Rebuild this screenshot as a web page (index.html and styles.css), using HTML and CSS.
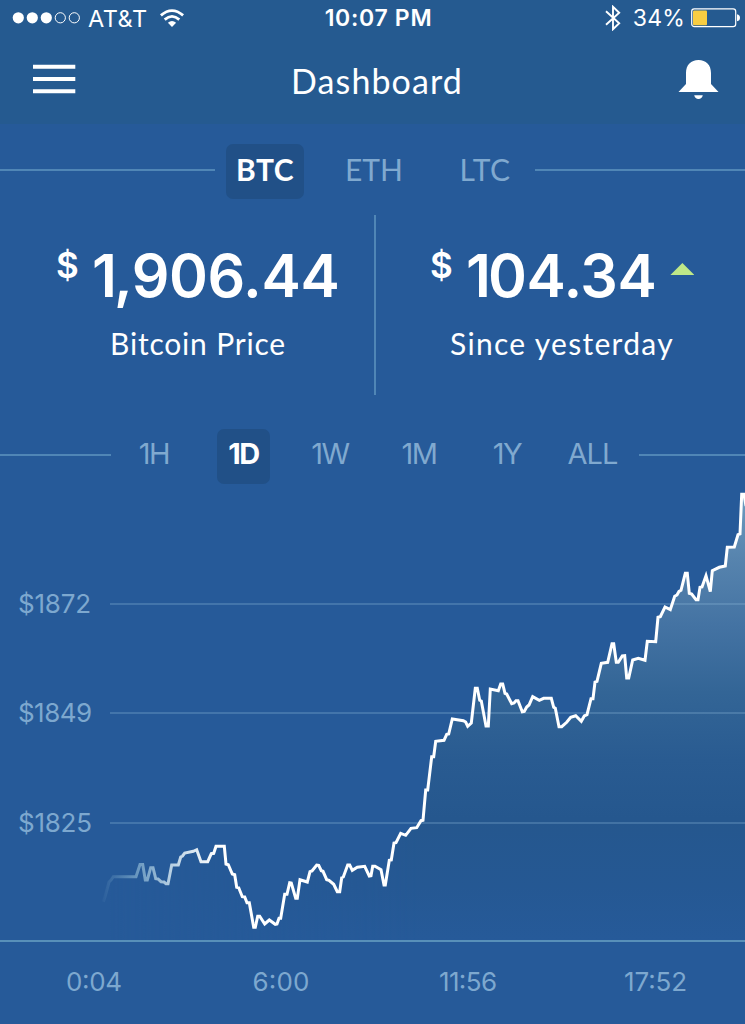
FILE: index.html
```html
<!DOCTYPE html>
<html lang="en">
<head>
<meta charset="utf-8">
<title>Dashboard</title>
<link rel="stylesheet" href="styles.css">
</head>
<body>
<div class="app">
  <header class="header">
    <div class="status">
      <div class="status-side">
        <svg class="signal" width="70" height="14" viewBox="0 0 70 14">
          <g fill="#fff"><circle cx="6.3" cy="6.8" r="5.6"/><circle cx="20.3" cy="6.8" r="5.6"/><circle cx="34.3" cy="6.8" r="5.6"/></g>
          <g fill="none" stroke="#fff" stroke-width="1"><circle cx="48.3" cy="6.8" r="5.1"/><circle cx="62.3" cy="6.8" r="5.1"/></g>
        </svg>
        <span class="carrier">AT&amp;T</span>
        <svg class="wifi" width="26" height="20" viewBox="0 0 26 20">
          <g fill="none" stroke="#fff" stroke-width="2.8"><path d="M1.9 7.4Q13 -2.2 24.1 7.4"/><path d="M5.7 11.6Q13 5.2 20.3 11.6"/></g>
          <path fill="#fff" d="M13 18.9L8.9 14.8Q13 11.2 17.1 14.8Z"/>
        </svg>
      </div>
      <span class="clock">10:07 PM</span>
      <div class="status-side status-right">
        <svg width="16" height="26" viewBox="0 0 16 26"><path d="M1 6.3L14.2 18.2L8 24.2V1.8L14.2 7.8L1 19.7" fill="none" stroke="#fff" stroke-width="1.9"/></svg>
        <span class="percent">34%</span>
        <svg width="50" height="20" viewBox="0 0 50 20">
          <rect x="1.7" y=".9" width="44" height="17.8" rx="2.6" fill="none" stroke="#fff" stroke-width="1.2"/>
          <rect x="3" y="2.4" width="14" height="14.8" rx="1" fill="#f8cd42"/>
          <path d="M47 6.3Q50 6.8 50 9.8T47 13.3Z" fill="#fff"/>
        </svg>
      </div>
    </div>
    <div class="nav">
      <svg class="menu" width="43" height="30" viewBox="0 0 43 30"><path d="M0 2.7H42.3M0 15H42.3M0 27.2H42.3" stroke="#fff" stroke-width="4"/></svg>
      <h1 class="title">Dashboard</h1>
      <svg class="bell" width="41" height="41" viewBox="0 0 41 41"><path fill="#fff" d="M8 14C8 6 13 1 20.5 1S33 6 33 14V25L40.5 33H.5L8 25ZM16.2 36.2H24.8Q23.8 40 20.5 40T16.2 36.2Z"/></svg>
    </div>
  </header>

  <nav class="tabs coins">
    <span class="rule"></span>
    <span class="tab active"><b>BTC</b></span>
    <span class="tab">ETH</span>
    <span class="tab ltc">LTC</span>
    <span class="rule"></span>
  </nav>

  <section class="stats">
    <div class="stat">
      <div class="amount"><span class="currency">$</span><span class="one">1</span><span>,906.44</span></div>
      <div class="label">Bitcoin Price</div>
    </div>
    <div class="stat change">
      <div class="amount"><span class="currency">$</span><span class="one">1</span><span>04.34</span><span class="up"></span></div>
      <div class="label">Since yesterday</div>
    </div>
  </section>

  <nav class="tabs ranges">
    <span class="rule"></span>
    <span class="tab">1H</span>
    <span class="tab active"><b>1D</b></span>
    <span class="tab">1W</span>
    <span class="tab">1M</span>
    <span class="tab">1Y</span>
    <span class="tab all">ALL</span>
    <span class="rule"></span>
  </nav>

  <svg class="chart" width="745" height="540" viewBox="0 484 745 540">
    <defs>
      <linearGradient id="area" gradientUnits="userSpaceOnUse" x1="0" y1="490" x2="0" y2="940">
        <stop offset="0" stop-color="#6f9dc1"/>
        <stop offset=".15" stop-color="#5784ae"/>
        <stop offset=".3" stop-color="#4473a3"/>
        <stop offset=".45" stop-color="#336596"/>
        <stop offset=".6" stop-color="#295b91"/>
        <stop offset=".73" stop-color="#25578e"/>
        <stop offset=".88" stop-color="#255893"/>
        <stop offset="1" stop-color="#265a99"/>
      </linearGradient>
      <linearGradient id="fade" gradientUnits="userSpaceOnUse" x1="110" y1="0" x2="420" y2="0">
        <stop offset="0" stop-color="#000"/><stop offset="1" stop-color="#fff"/>
      </linearGradient>
      <linearGradient id="stroke" gradientUnits="userSpaceOnUse" x1="100" y1="0" x2="216" y2="0">
        <stop offset="0" stop-color="#8fbbd6" stop-opacity="0"/>
        <stop offset=".3" stop-color="#8fbbd6" stop-opacity=".6"/>
        <stop offset=".6" stop-color="#c5dbea" stop-opacity=".9"/>
        <stop offset="1" stop-color="#fff"/>
      </linearGradient>
      <mask id="left" maskUnits="userSpaceOnUse" x="0" y="484" width="745" height="540"><rect y="484" width="745" height="540" fill="url(#fade)"/></mask>
    </defs>
    <path id="fill" fill="url(#area)" mask="url(#left)"/>
    <path d="M110 604H745M110 713H745M110 823H745" stroke="#8ebadb" stroke-opacity=".28" stroke-width="2"/>
    <path d="M0 941H745" stroke="#5890b9" stroke-width="2"/>
    <path id="line" fill="none" stroke="url(#stroke)" stroke-width="3"/>
    <g class="axis">
      <text x="18" y="613" textLength="73">$1872</text>
      <text x="18" y="722" textLength="74">$1849</text>
      <text x="18" y="832" textLength="74">$1825</text>
      <text x="66" y="991" textLength="56">0:04</text>
      <text x="252.5" y="991" textLength="57">6:00</text>
      <text x="439" y="991" textLength="58">11:56</text>
      <text x="624" y="991" textLength="63">17:52</text>
    </g>
  </svg>
</div>
<script src="chart.js"></script>
</body>
</html>
```
FILE: styles.css
```css
body { margin: 0; background: #265a99; color: #fff; font-family: "Lato", sans-serif; }
.app { width: 745px; height: 1024px; overflow: hidden; display: flex; flex-direction: column; background: #265a99; }

.header { height: 124px; flex: none; background: #255a90; }
.status { height: 36px; display: grid; grid-template-columns: 1fr auto 1fr; align-items: center; padding: 0 5px 0 12px; font-family: "Inter", sans-serif; font-size: 23px; }
.status-side { display: flex; align-items: center; }
.status-right { justify-content: flex-end; }
.carrier { margin-left: 6px; font-size: 23.5px; letter-spacing: .5px; font-weight: 400; }
.wifi { margin-left: 11px; }
.clock { padding-left: 5px; font-weight: 600; letter-spacing: .7px; }
.percent { margin: 0 5px 0 12px; font-weight: 400; letter-spacing: .2px; }

.nav { height: 86px; display: flex; align-items: center; justify-content: space-between; padding: 0 26px 0 33px; box-sizing: border-box; }
.title { margin: 4px 0 0; font-size: 34px; line-height: 40px; font-weight: 400; letter-spacing: 1.1px; }

.tabs { height: 55px; flex: none; display: grid; align-items: center; font-size: 30px; line-height: 50px; color: #80a9cf; }
.tab { height: 55px; text-align: center; }
.coins { margin-top: 20px; grid-template-columns: 226px 109px 78px 108px 224px; }
.coins .ltc { padding-left: 36px; letter-spacing: .5px; }
.ranges { grid-template-columns: 111px 86px 93px 80px 98px 78px 93px 106px; font-family: "Inter", sans-serif; font-weight: 400; font-size: 29px; letter-spacing: -1.5px; }
.ranges .all { letter-spacing: -1px; }
.rule { height: 2px; margin-bottom: 3px; background: #5086b6; }
.active { border-radius: 7px; background: #215087; color: #fff; }
.active b { font-weight: 700; }
.coins .rule:first-child { width: 215px; }
.coins .rule:last-child { width: 210px; justify-self: end; }
.coins .active { width: 78px; letter-spacing: .5px; }
.ranges .active { width: 53px; justify-self: center; }

.stats { height: 180px; flex: none; margin: 16px 0 34px; display: grid; grid-template-columns: 374px 1fr; }
.stat { display: flex; flex-direction: column; }
.change { border-left: 2px solid #5086b6; }
.amount { display: flex; height: 110px; padding: 25px 0 0 56px; box-sizing: border-box; font-family: "Inter", sans-serif; font-size: 59px; line-height: 72px; font-weight: 600; letter-spacing: -.4px; }
.change .amount { padding-left: 54px; }
.currency { width: 36px; font-size: 35px; line-height: 50px; }
.one { letter-spacing: -3px; }
.up { width: 24px; height: 12px; margin: 23px 0 0 14px; background: #bfe888; clip-path: polygon(50% 0, 100% 100%, 0 100%); }
.label { font-size: 30px; line-height: 36px; letter-spacing: .8px; text-align: center; padding-left: 22px; }
.change .label { padding-left: 3px; letter-spacing: 1.3px; }

.chart { display: block; flex: none; }
.axis { fill: #7da8cf; font-family: "Inter", sans-serif; font-size: 26px; font-weight: 400; }
```
FILE: chart.js
```js
const points = `103.3,901.7 105,896.7 109,882 111,880 113.3,876.7 136,876.7 140,864.5 142.7,864.5 145.3,880 147.3,880 150.7,867.7 153,867.7 155.7,878.7 158,879 161,881.7 164,882 166,883.7 168,883.7 171.7,865 178.3,865 180.7,857 182.5,856 184.7,853 193.3,851.3 196.7,849.7 201,861.7 207.7,861.7 211.3,853.7 213.7,853.3 216,846.3 224.3,846.3 226,864 228.3,864.7 232.3,874 234.7,874.7 236.7,887.3 238.7,887.7 242.3,896.7 244.7,897 247,902.7 249.3,902.7 253.7,927.3 255.3,927.3 257.7,916.3 259.7,916.3 264.7,924 269.3,920 275.3,924.3 277,924 279,918.3
280.7,918.3 284.7,894.3 287,894.3 289.7,882.7 291.3,883 295.7,898.3 297.3,898.3 300,879.7 307.3,882 310,871.7 312,871 316.7,865 318.7,865.3 321.3,870.7 323,871.3 326.7,879.7 329,880.3 333.7,884.3 337.3,891.7 339.7,891.7 341.7,877.7 343.3,877 347.7,865 349.7,865 352.3,870.3 357.3,867.3 364.7,866.3 369.3,876 371,875.7 372.7,866.3 375,866.3 381,869.7 384,885 385.3,885 389.3,860.3 391.3,860 394,843 396,842.7 400.7,833.3 405.7,835.3 411,828.3 416.7,827.7 421,820.7
423,820.3 425.7,790 427.7,790 431.7,756.7 433.7,756.7 435.7,741.3 444,740.3 446.7,734.3 448.7,734 452.3,719 463.3,720.7 465.7,722 467.7,726.3 471.3,723 475.3,688.3 477.3,688.3 479.7,700.3 481.3,701 486,726 488.3,726 490.3,689 498.3,690.7 500.7,684 502.7,684 505,693.3 506.7,694 511.7,703.7 514,703 516,700.7 518,700.7 522.3,711.7 524.3,711.3 526.7,707 529,705 532.7,696.7 539.3,700.3 543.7,698.3 551.3,698.3 553.7,707.3 555.3,708.3 559,726.7 561.7,726.7 566.7,722.3 570.7,717.3 575.7,715.7 581.3,721.3 584.3,716
587,714.7 591,698.7 593,698.7 595,682 597,681.3 601.3,663.3 607.7,662.3 612,643.7 613.7,643.7 616.3,662.3 618.3,662.3 622.3,656 624.7,655.7 626.7,678 628.7,678 632.7,660 638.3,658.3 645,660.3 647.3,641.3 655.7,641.7 658,617.3 660.3,616.7 665,607 670.3,609.7 674.7,596.3 677,595 679,591.3 681,590.3 685.3,573.3 687.3,573.3 689.3,593.3 691.7,594 696,599.7 698,599.7 700,587.3 702,587 706,575.7 710.3,591.7 712.3,570.7 719.3,567.3 725.3,566 727.3,547.3 734.3,547 738,534.7 740,534 741.7,494.3 744,494.3 746,506`;
const line = 'M' + points.split(/\s+/).join('L');
document.getElementById('line').setAttribute('d', line);
document.getElementById('fill').setAttribute('d', line + 'V940H103Z');
```
